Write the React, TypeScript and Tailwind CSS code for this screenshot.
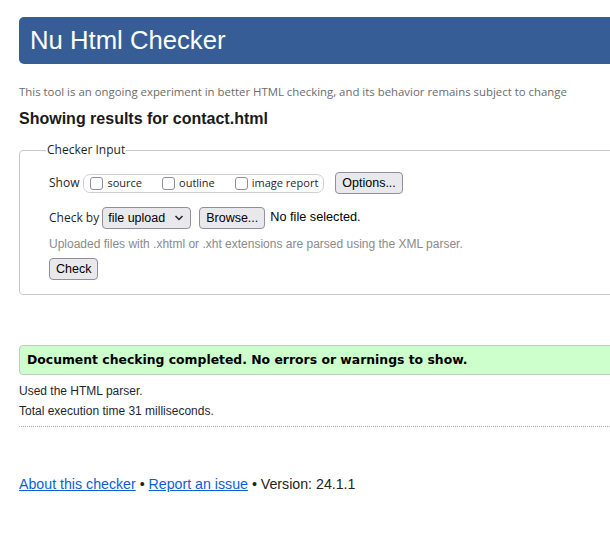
import React from "react";

const sans = "font-['Open_Sans','Noto_Sans',sans-serif]";
const arial = "font-['Liberation_Sans',Arial,sans-serif]";

function Box({ label }: { label: string }) {
  return (
    <span className="flex items-center">
      <span className="inline-block w-[13px] h-[13px] border border-[#8f8f9d] rounded-[3px] bg-white mr-[4px]" />
      <span className={`${sans} text-[11px] text-[#1f1f1f]`}>{label}</span>
    </span>
  );
}

function Btn({ children, className = "" }: { children: React.ReactNode; className?: string }) {
  return (
    <span
      className={`${arial} inline-flex items-center h-[22px] px-[6px] text-[12.5px] text-black bg-[#e9e9ed] border border-[#8f8f9d] rounded-[4px] ${className}`}
    >
      {children}
    </span>
  );
}

export default function App() {
  return (
    <div className="w-[610px] h-[536px] overflow-hidden bg-white">
      <div className="w-[720px] pl-[19px] pt-[17px]">
        <div className={`${arial} h-[47px] bg-[#365d95] rounded-l-[5px] pl-[11px] flex items-center text-white text-[25.7px]`}>
          Nu Html Checker
        </div>
        <p className={`${sans} mt-[20px] text-[11.4px] leading-[16px] text-[#6b6b6b]`}>
          This tool is an ongoing experiment in better HTML checking, and its behavior remains subject to change
        </p>
        <h2 className={`${arial} mt-[9px] text-[16px] leading-[20px] font-bold text-[#1a1a1a]`}>
          Showing results for contact.html
        </h2>
        <fieldset className="mt-[13px] border border-[#c8c8c8] rounded-l-[4px] pl-[29px] pt-[14px] pb-[14px]">
          <legend className={`${sans} -ml-[3px] px-[1px] text-[12px] leading-[16px] text-[#1f1f1f]`}>Checker Input</legend>
          <div className="flex items-center h-[22px]">
            <span className={`${sans} text-[12px] text-[#1f1f1f] mr-[4px]`}>Show</span>
            <span className="flex items-center h-[19px] border border-[#cfcfcf] rounded-[7px] pl-[6px] pr-[5px] gap-[20px]">
              <Box label="source" />
              <Box label="outline" />
              <Box label="image report" />
            </span>
            <Btn className="ml-[11px]">Options...</Btn>
          </div>
          <div className="flex items-center h-[22px] mt-[13px]">
            <span className={`${sans} text-[12px] text-[#1f1f1f] mr-[3px]`}>Check by</span>
            <span
              className={`${arial} inline-flex items-center justify-between w-[89px] h-[22px] pl-[5px] pr-[5px] text-[12.5px] text-black bg-[#e9e9ed] border border-[#8f8f9d] rounded-[4px]`}
            >
              file upload
              <svg width="10" height="8" viewBox="0 0 10 8" className="mr-[1px]">
                <path d="M1.5 2 L5 5.5 L8.5 2" fill="none" stroke="#222" strokeWidth="1.5" />
              </svg>
            </span>
            <Btn className="ml-[8px]">Browse...</Btn>
            <span className={`${arial} text-[12.7px] text-black ml-[5px]`}>No file selected.</span>
          </div>
          <p className={`${arial} mt-[7px] text-[12px] leading-[16px] text-[#8a8a8a]`}>
            Uploaded files with .xhtml or .xht extensions are parsed using the XML parser.
          </p>
          <div className="mt-[6px] flex">
            <Btn className="px-[4px]">Check</Btn>
          </div>
        </fieldset>
        <div className="mt-[50px] h-[30px] bg-[#ccffcc] border border-[#c6c6c6] rounded-l-[4px] flex items-center pl-[7px]">
          <span className="font-['DejaVu_Sans',Verdana,sans-serif] font-bold text-[12.4px] text-black">
            Document checking completed. No errors or warnings to show.
          </span>
        </div>
        <p className={`${arial} mt-[8px] text-[12px] leading-[16px] text-[#1f1f2f]`}>Used the HTML parser.</p>
        <p className={`${arial} mt-[4px] text-[12px] leading-[16px] text-[#1f1f2f]`}>Total execution time 31 milliseconds.</p>
        <div className="mt-[7px] border-b border-dotted border-[#aaaaaa]" />
        <div className={`${arial} mt-[48px] text-[14.2px] leading-[18px] text-[#222]`}>
          <a href="#" className="text-[#0b5ed7] underline">About this checker</a>
          {" \u2022 "}
          <a href="#" className="text-[#0b5ed7] underline">Report an issue</a>
          {" \u2022 Version: 24.1.1"}
        </div>
      </div>
    </div>
  );
}
